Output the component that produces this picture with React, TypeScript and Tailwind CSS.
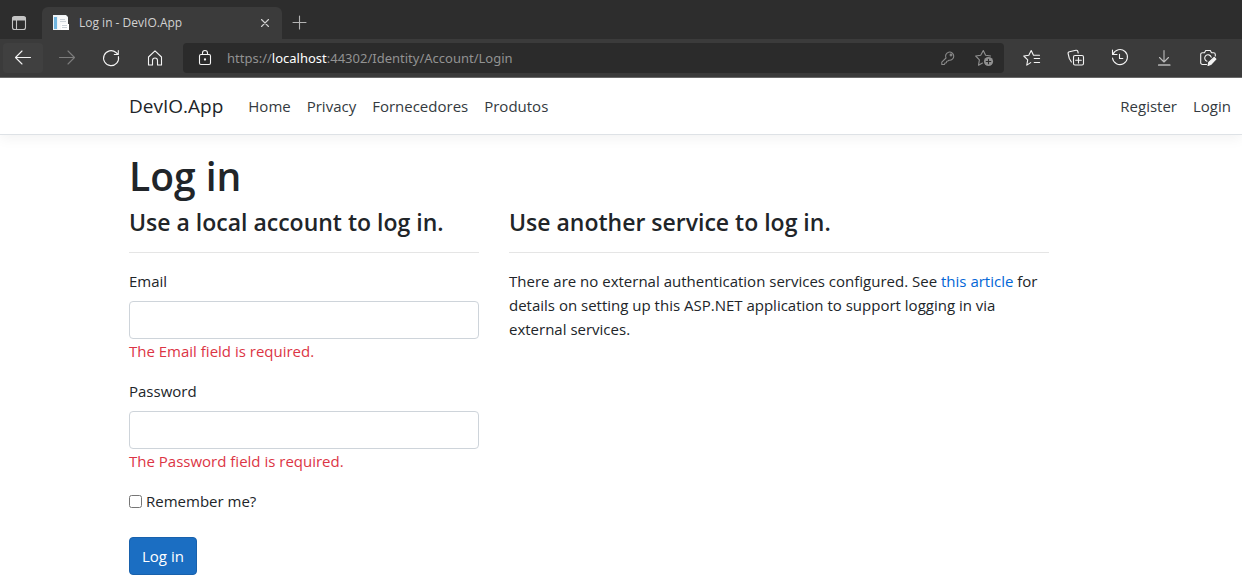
import { useState } from "react";
import type { ReactNode } from "react";

function Icon({ size = 20, className = "", children }: { size?: number; className?: string; children: ReactNode }) {
  return (
    <svg
      width={size}
      height={size}
      viewBox={`0 0 ${size} ${size}`}
      fill="none"
      stroke="currentColor"
      strokeWidth={1.1}
      strokeLinecap="round"
      strokeLinejoin="round"
      className={className}
      aria-hidden="true"
    >
      {children}
    </svg>
  );
}

function ToolButton({ label, active = false, muted = false, children }: { label: string; active?: boolean; muted?: boolean; children: ReactNode }) {
  return (
    <button
      type="button"
      aria-label={label}
      disabled={muted}
      className={`flex h-[30px] w-10 shrink-0 items-center justify-center rounded-sm ${active ? "bg-[#404040]" : ""} ${muted ? "text-[#7d7d7d]" : "text-[#f4f4f4]"}`}
    >
      {children}
    </button>
  );
}

function TabStrip() {
  return (
    <div className="flex h-[39px] items-end bg-[#2d2d2d] font-['Open_Sans','Noto_Sans',sans-serif] text-xs">
      <button type="button" aria-label="Tab actions" className="flex h-8 w-[42px] items-center justify-center pr-1 text-[#c4c4c4]">
        <Icon size={16}>
          <rect x="1.5" y="1.5" width="13" height="13" rx="2" />
          <path d="M2 2.5h12v2.500H2zM5.500 5v9" fill="currentColor" />
        </Icon>
      </button>
      <div className="flex h-8 w-60 items-center rounded-t-md bg-[#3b3b3b] pr-2 pl-[11px] text-[#d2d2d2]">
        <svg width="16" height="16" viewBox="0 0 16 16" aria-hidden="true">
          <path d="M0 0h13l2 2v13H0z" fill="#eef3f6" />
          <path d="M1 2h3v12H1z" fill="#71b5df" />
          <path d="M5 1h8l2 3v11H5z" fill="#f8f9fa" />
          <path d="M8 9h8v6H8z" fill="#fff" />
          <path d="M7 4.5h5M7 6.500h6M9 10.500h5M9 12.500h5" stroke="#cbd2d8" />
        </svg>
        <span className="grow truncate pl-[10px]">Log in - DevIO.App</span>
        <button type="button" aria-label="Close tab" className="flex size-[18px] items-center justify-center">
          <Icon size={12}>
            <path d="M2.500 2.500l7 7M9.500 2.500l-7 7" />
          </Icon>
        </button>
      </div>
      <button type="button" aria-label="New tab" className="flex h-8 w-9 items-center justify-center text-[#b4b4b4]">
        <Icon size={16}>
          <path d="M7.500 1v13M1 7.500h13" />
        </Icon>
      </button>
    </div>
  );
}

function Toolbar() {
  return (
    <div className="flex h-[39px] items-center border-b border-[#6a6a6a] bg-[#3b3b3b] pr-[14px] pl-[3px]">
      <div className="flex gap-1">
        <ToolButton label="Back" active>
          <Icon><path d="M17.5 9.500H2.500M9 3L2.500 9.500 9 16" /></Icon>
        </ToolButton>
        <ToolButton label="Forward" muted>
          <Icon><path d="M2.500 9.500h15M11 3l6.500 6.500L11 16" /></Icon>
        </ToolButton>
        <ToolButton label="Refresh">
          <Icon><path d="M17.4 8.500A7.500 7.500 0 1 1 15 4.500l2 1.900M17.300 2.500v4h-4" /></Icon>
        </ToolButton>
        <ToolButton label="Home">
          <Icon><path d="M3.500 9L10 2.800 16.500 9v8h-4v-4.500a2.500 2.500 0 0 0-5 0V17h-4z" /></Icon>
        </ToolButton>
      </div>
      <div className="mx-2 flex h-[30px] min-w-0 grow items-center rounded bg-[#2b2b2b]">
        <button type="button" aria-label="View site information" className="flex w-11 shrink-0 items-center justify-center text-[#f4f4f4]">
          <Icon>
            <rect x="4.5" y="6.500" width="11" height="10" rx="1.500" />
            <path d="M7.500 6.500V5a2.500 2.500 0 0 1 5 0v1.500" />
            <circle cx="10" cy="11.500" r="0.600" fill="currentColor" />
          </Icon>
        </button>
        <a href="#login" className="min-w-0 grow truncate font-['Noto_Sans','Open_Sans',sans-serif] text-[13px] text-[#929292]">
          https://<span className="text-white">localhost</span>:44302/Identity/Account/Login
        </a>
        <button type="button" aria-label="Saved passwords" className="flex w-9 shrink-0 items-center justify-center text-[#8a8a8a]">
          <Icon size={16}>
            <path d="M6 8A4.100 4.100 0 1 1 9 10.200l-1.200.8-1 .2-.4 1.500-1.400.3-.5 1.400-2.700.1v-2.400z" />
            <circle cx="11" cy="5" r="0.900" />
          </Icon>
        </button>
        <button type="button" aria-label="Add to favorites" className="mr-0.5 flex w-9 shrink-0 items-center justify-center text-[#909090]">
          <Icon>
            <path d="M8.500 15l-4 2.200.9-5.400L1.700 8l5-.7 2.600-4.800 2.300 4.800 5 .7" />
            <circle cx="14.500" cy="13.500" r="4.600" fill="currentColor" stroke="none" />
            <path d="M14.500 11.200v4.600M12.200 13.500h4.600" stroke="#2b2b2b" />
          </Icon>
        </button>
      </div>
      <div className="flex gap-1">
        <ToolButton label="Favorites">
          <Icon>
            <path d="M8.700 14.600l-3.900 2.500.9-5.200L1.800 8l5-.7 2.400-4.700 2.300 4.700h6M12.200 10.500h5.400M12.200 14.500h5.400" />
          </Icon>
        </ToolButton>
        <ToolButton label="Collections">
          <Icon>
            <rect x="7.500" y="7.500" width="10" height="9.500" rx="1.500" />
            <path d="M12.500 9.500v5.500M9.700 12.300h5.600M5.400 14L3.300 10.500 2.100 5.500a1.500 1.500 0 0 1 1.200-1.800L10 2.300a1.500 1.500 0 0 1 1.800 1.200l.4 1.500" />
          </Icon>
        </ToolButton>
        <ToolButton label="History">
          <Icon>
            <path d="M3 6.200A7.500 7.500 0 1 1 2.500 10M2.500 2v4.500H7M9.500 6.300v4.200h3.300" />
          </Icon>
        </ToolButton>
        <ToolButton label="Downloads">
          <Icon>
            <path d="M4.500 17h11.500" />
            <path d="M10 2.500V14M5.500 9.500L10 14l4.500-4.500" stroke="#bdbdbd" />
          </Icon>
        </ToolButton>
        <ToolButton label="Web capture">
          <Icon>
            <path d="M8.500 16.500h-4a1.800 1.800 0 0 1-1.800-1.800V6.500a1.800 1.800 0 0 1 1.800-1.800h2l1.200-2.200h4.600l1.200 2.200h2a1.800 1.800 0 0 1 1.800 1.800V8M9 13.200a3.300 3.300 0 1 1 4.200-4" />
            <path d="M10 17.500l.7-3 5.500-5.100 1.700 1.800-5.200 5.300z" fill="currentColor" />
          </Icon>
        </ToolButton>
      </div>
    </div>
  );
}

function SiteNav() {
  return (
    <nav className="flex h-[57px] items-center border-b border-[#dee2e6] bg-white pr-[3px] pl-[129px] text-[15px] text-[#343a40] shadow-[0_4px_12px_rgba(0,0,0,0.05)]">
      <a href="#app" className="mr-[17px] text-[19px] text-[#212529]">DevIO.App</a>
      <div className="flex grow">
        {["Home", "Privacy", "Fornecedores", "Produtos"].map((item) => (
          <a key={item} href={`#${item.toLowerCase()}`} className="px-2">{item}</a>
        ))}
      </div>
      <a href="#register" className="px-2">Register</a>
      <a href="#login" className="px-2">Login</a>
    </nav>
  );
}

function Field({ id, label, type }: { id: string; label: string; type: string }) {
  return (
    <div className="mb-4">
      <label htmlFor={id} className="mb-2 block">{label}</label>
      <input
        id={id}
        type={type}
        aria-describedby={`${id}-error`}
        className="block h-[38px] w-full rounded border border-[#ced4da] bg-white px-3"
      />
      <p id={`${id}-error`} className="text-[#dc3545]">The {label} field is required.</p>
    </div>
  );
}

export default function App() {
  const [remember, setRemember] = useState(false);
  return (
    <div className="min-h-screen bg-white font-['Open_Sans','Noto_Sans',sans-serif] text-[15px] leading-6 text-[#212529]">
      <TabStrip />
      <Toolbar />
      <SiteNav />
      <main className="pt-[17px] pr-[3px] pl-[129px]">
        <h1 className="mb-2 text-[39px] leading-[48px] font-semibold">Log in</h1>
        <div className="flex gap-[30px]">
          <form className="w-[350px] shrink-0" onSubmit={(e) => e.preventDefault()}>
            <h2 className="text-[23px] leading-[29px] font-semibold">Use a local account to log in.</h2>
            <hr className="mt-[15px] mb-4 border-[#e5e5e5]" />
            <Field id="email" label="Email" type="email" />
            <Field id="password" label="Password" type="password" />
            <label className="mb-6 flex items-center gap-1">
              <input type="checkbox" checked={remember} onChange={(e) => setRemember(e.target.checked)} className="size-[13px]" />
              Remember me?
            </label>
            <button type="submit" className="h-[38px] rounded border border-[#1861ac] bg-[#1b6ec2] px-3 text-white">Log in</button>
          </form>
          <section className="max-w-[540px] grow">
            <h2 className="text-[23px] leading-[29px] font-semibold">Use another service to log in.</h2>
            <hr className="mt-[15px] mb-4 border-[#e5e5e5]" />
            <p>
              There are no external authentication services configured. See{" "}
              <a href="#article" className="text-[#0366d6]">this article</a> for details on setting up this ASP.NET application to support logging in via external services.
            </p>
          </section>
        </div>
      </main>
    </div>
  );
}
